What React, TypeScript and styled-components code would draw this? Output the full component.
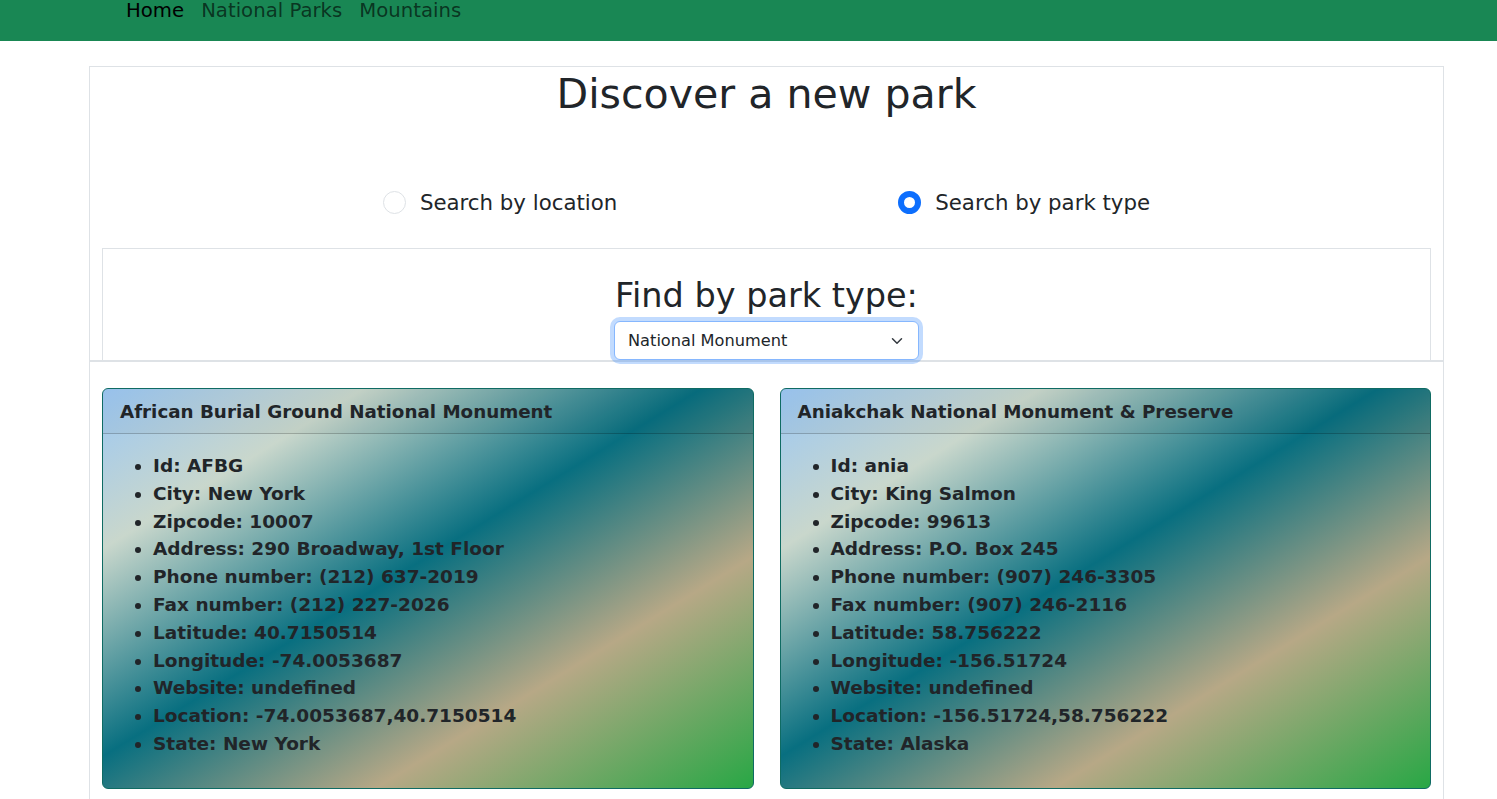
import React from "react";
import styled, { createGlobalStyle } from "styled-components";

const GlobalStyle = createGlobalStyle`
  * { box-sizing: border-box; }
  body {
    margin: 0;
    font-family: "DejaVu Sans", sans-serif;
    color: #212529;
    background: #fff;
  }
`;

const NavBar = styled.nav`
  height: 41px;
  background-color: #198754;
  display: flex;
  align-items: flex-start;
  padding-left: 126px;
  gap: 17px;
`;

const NavLink = styled.a<{ $active?: boolean }>`
  font-size: 19.7px;
  line-height: 21px;
  color: ${(p) => (p.$active ? "#000" : "rgba(0, 0, 0, 0.62)")};
  text-decoration: none;
`;

const Main = styled.div`
  margin: 25px 53px 0 89px;
  border: 1px solid #dee2e6;
  padding: 0 12px 12px;
`;

const Title = styled.h1`
  margin: 0;
  padding-top: 2px;
  text-align: center;
  font-weight: 400;
  font-size: 41.1px;
  line-height: 50px;
`;

const RadioRow = styled.div`
  display: flex;
  justify-content: center;
  gap: 281px;
  margin-top: 63px;
  height: 40px;
  align-items: center;
`;

const RadioLabel = styled.label`
  display: flex;
  align-items: center;
  gap: 14px;
  font-size: 21.3px;
  cursor: pointer;
`;

const RadioDot = styled.span<{ $checked?: boolean }>`
  width: 23px;
  height: 23px;
  border-radius: 50%;
  border: ${(p) => (p.$checked ? "6.5px solid #0d6efd" : "1px solid #dee2e6")};
  background: #fff;
`;

const FilterBox = styled.div`
  margin: 26px 0 0;
  border: 1px solid #dee2e6;
  border-bottom: none;
  display: flex;
  flex-direction: column;
  align-items: center;
  padding-top: 24px;
`;

const FilterTitle = styled.h2`
  margin: 0;
  font-weight: 400;
  font-size: 33.5px;
  line-height: 46px;
`;

const SelectBox = styled.div`
  width: 305px;
  height: 39px;
  margin-top: 2px;
  border: 1px solid #86b7fe;
  border-radius: 6px;
  box-shadow: 0 0 0 4px rgba(13, 110, 253, 0.25);
  display: flex;
  align-items: center;
  justify-content: space-between;
  padding: 0 15px 0 13px;
  font-size: 16.2px;
  background: #fff;
  position: relative;
  z-index: 1;
`;

const Divider = styled.div`
  height: 2px;
  background: #dee2e6;
  margin: 0 -12px 26px;
`;

const CardGrid = styled.div`
  display: grid;
  grid-template-columns: 1fr 1fr;
  gap: 26px;
`;

const Card = styled.div`
  height: 401px;
  border: 1px solid #0f6b63;
  border-radius: 6px;
  overflow: hidden;
  background: linear-gradient(
    to bottom right,
    #9cc8f4 0%,
    #c9d7cc 20%,
    #086f80 46%,
    #b7a886 71%,
    #28a745 100%
  );
`;

const CardHeader = styled.div`
  height: 45px;
  display: flex;
  align-items: center;
  padding: 0 17px;
  font-weight: 700;
  font-size: 18.3px;
  border-bottom: 1px solid rgba(0, 0, 0, 0.2);
  background: rgba(0, 0, 0, 0.03);
`;

const InfoList = styled.ul`
  margin: 18px 0 0;
  padding-left: 50px;
  font-weight: 700;
  font-size: 18.5px;
  line-height: 27.8px;
`;

type Park = { name: string; rows: string[] };

const parks: Park[] = [
  {
    name: "African Burial Ground National Monument",
    rows: [
      "Id: AFBG",
      "City: New York",
      "Zipcode: 10007",
      "Address: 290 Broadway, 1st Floor",
      "Phone number: (212) 637-2019",
      "Fax number: (212) 227-2026",
      "Latitude: 40.7150514",
      "Longitude: -74.0053687",
      "Website: undefined",
      "Location: -74.0053687,40.7150514",
      "State: New York",
    ],
  },
  {
    name: "Aniakchak National Monument & Preserve",
    rows: [
      "Id: ania",
      "City: King Salmon",
      "Zipcode: 99613",
      "Address: P.O. Box 245",
      "Phone number: (907) 246-3305",
      "Fax number: (907) 246-2116",
      "Latitude: 58.756222",
      "Longitude: -156.51724",
      "Website: undefined",
      "Location: -156.51724,58.756222",
      "State: Alaska",
    ],
  },
];

export default function App() {
  return (
    <>
      <GlobalStyle />
      <NavBar>
        <NavLink $active href="#">Home</NavLink>
        <NavLink href="#">National Parks</NavLink>
        <NavLink href="#">Mountains</NavLink>
      </NavBar>
      <Main>
        <Title>Discover a new park</Title>
        <RadioRow>
          <RadioLabel>
            <RadioDot />
            Search by location
          </RadioLabel>
          <RadioLabel>
            <RadioDot $checked />
            Search by park type
          </RadioLabel>
        </RadioRow>
        <FilterBox>
          <FilterTitle>Find by park type:</FilterTitle>
          <SelectBox>
            <span>National Monument</span>
            <svg width="12" height="12" viewBox="0 0 16 16" fill="none">
              <path d="M2 5l6 6 6-6" stroke="#343a40" strokeWidth="2" strokeLinecap="round" strokeLinejoin="round" />
            </svg>
          </SelectBox>
        </FilterBox>
        <Divider />
        <CardGrid>
          {parks.map((park) => (
            <Card key={park.name}>
              <CardHeader>{park.name}</CardHeader>
              <InfoList>
                {park.rows.map((row) => (
                  <li key={row}>{row}</li>
                ))}
              </InfoList>
            </Card>
          ))}
        </CardGrid>
      </Main>
    </>
  );
}
